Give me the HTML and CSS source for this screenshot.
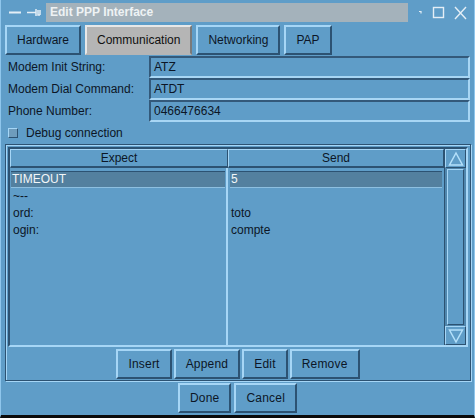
FILE: index.html
```html
<!DOCTYPE html>
<html lang="en">
<head>
    <meta charset="UTF-8">
    <title>Edit PPP Interface</title>
    <link rel="stylesheet" href="styles.css">
</head>
<body>
    <div class="window">
        <!-- Title bar -->
        <div class="titlebar">
            <div class="wm-left">
                <svg width="40" height="24" viewBox="0 0 40 24">
                    <path d="M8 12.5h12" stroke="#e4eef6" stroke-width="2" fill="none"/>
                    <path d="M26 12.5h9M35 9v7M37 10v5h2M39 10v5" stroke="#e4eef6" stroke-width="1.5" fill="none"/>
                </svg>
            </div>
            <div class="title">Edit PPP Interface</div>
            <div class="wm-right">
                <svg width="66" height="24" viewBox="0 0 66 24">
                    <path d="M11 11.5h2v2" stroke="#e4eef6" stroke-width="1.2" fill="none"/>
                    <rect x="25.5" y="7.5" width="10" height="10" stroke="#e4eef6" stroke-width="1.4" fill="none"/>
                    <path d="M47 7l11 12M58 7l-11 12" stroke="#e4eef6" stroke-width="1.4" fill="none"/>
                </svg>
            </div>
        </div>

        <!-- Tabs -->
        <div class="tabs">
            <div class="tab">Hardware</div>
            <div class="tab active">Communication</div>
            <div class="tab">Networking</div>
            <div class="tab">PAP</div>
        </div>

        <!-- Modem fields -->
        <div class="fields">
            <label>Modem Init String:</label>
            <div class="input">ATZ</div>
            <label>Modem Dial Command:</label>
            <div class="input">ATDT</div>
            <label>Phone Number:</label>
            <div class="input">0466476634</div>
        </div>

        <div class="check-row">
            <span class="checkbox"></span>
            <span>Debug connection</span>
        </div>

        <!-- Expect / Send script -->
        <div class="group">
            <div class="list">
                <div class="cols">
                    <div class="list-header">
                        <div class="head-cell">Expect</div>
                        <div class="head-cell">Send</div>
                    </div>
                    <div class="list-body">
                        <div class="row selected">
                            <div class="cell">TIMEOUT</div>
                            <div class="cell">5</div>
                        </div>
                        <div class="row">
                            <div class="cell">~--</div>
                            <div class="cell"></div>
                        </div>
                        <div class="row">
                            <div class="cell">ord:</div>
                            <div class="cell">toto</div>
                        </div>
                        <div class="row">
                            <div class="cell">ogin:</div>
                            <div class="cell">compte</div>
                        </div>
                    </div>
                </div>
                <div class="scrollbar">
                    <div class="arrow">
                        <svg width="16" height="16" viewBox="0 0 16 16">
                            <path d="M8 2L14.5 14H1.5Z" stroke="#b4e0fa" stroke-width="1.5" fill="none"/>
                        </svg>
                    </div>
                    <div class="trough"><div class="slider"></div></div>
                    <div class="arrow">
                        <svg width="16" height="16" viewBox="0 0 16 16">
                            <path d="M8 14L14.5 2H1.5Z" stroke="#b4e0fa" stroke-width="1.5" fill="none"/>
                        </svg>
                    </div>
                </div>
            </div>
            <div class="list-buttons">
                <button>Insert</button>
                <button>Append</button>
                <button>Edit</button>
                <button>Remove</button>
            </div>
        </div>

        <div class="dialog-buttons">
            <button>Done</button>
            <button>Cancel</button>
        </div>
    </div>
</body>
</html>
```

FILE: styles.css
```css
* {
    margin: 0;
    padding: 0;
    box-sizing: border-box;
}

body {
    background-color: #5f9dc8;
    font-family: "Liberation Sans", Arial, sans-serif;
    font-size: 12px;
    color: #0c1626;
}

.window {
    width: 475px;
    height: 418px;
    display: flex;
    flex-direction: column;
    border-left: 1px solid #8fc6ec;
    border-right: 1px solid #8fc6ec;
    border-bottom: 3px solid #0b0b0b;
    background-color: #5f9dc8;
}

/* Title bar */
.titlebar {
    height: 24px;
    display: flex;
    align-items: flex-start;
}

.wm-left {
    width: 45px;
    height: 24px;
}

.title {
    flex: 1;
    height: 19px;
    margin-top: 3px;
    background-color: #a4b2bb;
    color: #eef2f4;
    font-weight: bold;
    line-height: 19px;
    padding-left: 4px;
}

.wm-right {
    width: 66px;
    height: 24px;
}

/* Tabs */
.tabs {
    height: 31px;
    display: flex;
    gap: 4px;
    padding-left: 4px;
}

.tab {
    height: 30px;
    margin-top: 1px;
    padding: 0 10px;
    line-height: 26px;
    border: 2px solid;
    border-color: #a6d6f6 #2c5272 #2c5272 #a6d6f6;
}

.tab.active {
    background-color: #b5b5b5;
    border-color: #e8e8e8 #7a7a7a #b5b5b5 #e8e8e8;
    color: #101010;
}

/* Fields */
.fields {
    display: grid;
    grid-template-columns: 141px 321px;
    grid-auto-rows: 22px;
    padding-top: 1px;
    padding-left: 7px;
}

.fields label {
    line-height: 22px;
}

.input {
    border: 2px solid;
    border-color: #33597a #a8d6f4 #a8d6f4 #33597a;
    padding-left: 3px;
    line-height: 18px;
}

.check-row {
    height: 21px;
    display: flex;
    align-items: center;
    gap: 8px;
    padding-left: 7px;
}

.checkbox {
    width: 10px;
    height: 10px;
    background-color: #6e9cbc;
    border: 1px solid;
    border-color: #a6d6f6 #2c5272 #2c5272 #a6d6f6;
}

/* Expect / Send group */
.group {
    height: 237px;
    margin: 1px 3px 0 4px;
    border: 1px solid #2c5272;
    box-shadow: inset 1px 1px 0 #a6d6f6, 1px 1px 0 #a6d6f6;
    padding: 2px 2px 0 2px;
    display: flex;
    flex-direction: column;
}

.list {
    height: 200px;
    display: flex;
    border: 2px solid;
    border-color: #2c5272 #a6d6f6 #a6d6f6 #2c5272;
}

.cols {
    flex: 1;
    display: flex;
    flex-direction: column;
}

.list-header {
    height: 19px;
    display: grid;
    grid-template-columns: 218px 1fr;
}

.head-cell {
    text-align: center;
    line-height: 16px;
    border-top: 1px solid #a6d6f6;
    border-left: 1px solid #a6d6f6;
    border-bottom: 2px solid #2c5272;
    border-right: 1px solid #2c5272;
}

.list-body {
    flex: 1;
    padding-top: 3px;
    background: linear-gradient(#a6d6f6, #a6d6f6) 216px 0 / 2px 100% no-repeat;
}

.row {
    height: 17px;
    display: grid;
    grid-template-columns: 218px 1fr;
}

.cell {
    padding-left: 3px;
    line-height: 17px;
}

.row.selected .cell {
    background-color: #53809f;
    color: #f2f6f8;
    border-top: 1px solid #2c5272;
    border-bottom: 1px solid #8dbfe0;
    line-height: 15px;
    margin-right: 3px;
    margin-left: 1px;
    padding-left: 1px;
}

.row.selected .cell:last-child {
    margin-left: 2px;
    margin-right: 2px;
}

/* Scrollbar */
.scrollbar {
    width: 22px;
    display: flex;
    flex-direction: column;
    border-left: 1px solid #2c5272;
}

.arrow {
    height: 19px;
    display: flex;
    align-items: center;
    justify-content: center;
    border: 1px solid;
    border-color: #a6d6f6 #2c5272 #2c5272 #a6d6f6;
}

.trough {
    flex: 1;
    padding: 1px 2px;
    background-color: #4f86ad;
}

.slider {
    height: 100%;
    border: 1px solid;
    border-color: #a6d6f6 #2c5272 #2c5272 #a6d6f6;
    background-color: #5f9dc8;
}

/* Buttons */
button {
    font-family: "Liberation Sans", Arial, sans-serif;
    font-size: 12px;
    letter-spacing: 0.2px;
    color: #0c1626;
    background-color: #5f9dc8;
    height: 30px;
    padding: 0 10px;
    border: 2px solid;
    border-color: #a6d6f6 #2c5272 #2c5272 #a6d6f6;
}

.list-buttons {
    flex: 1;
    display: flex;
    justify-content: center;
    align-items: center;
    gap: 2px;
}

.dialog-buttons {
    height: 34px;
    display: flex;
    justify-content: center;
    align-items: center;
    gap: 3px;
}
```
